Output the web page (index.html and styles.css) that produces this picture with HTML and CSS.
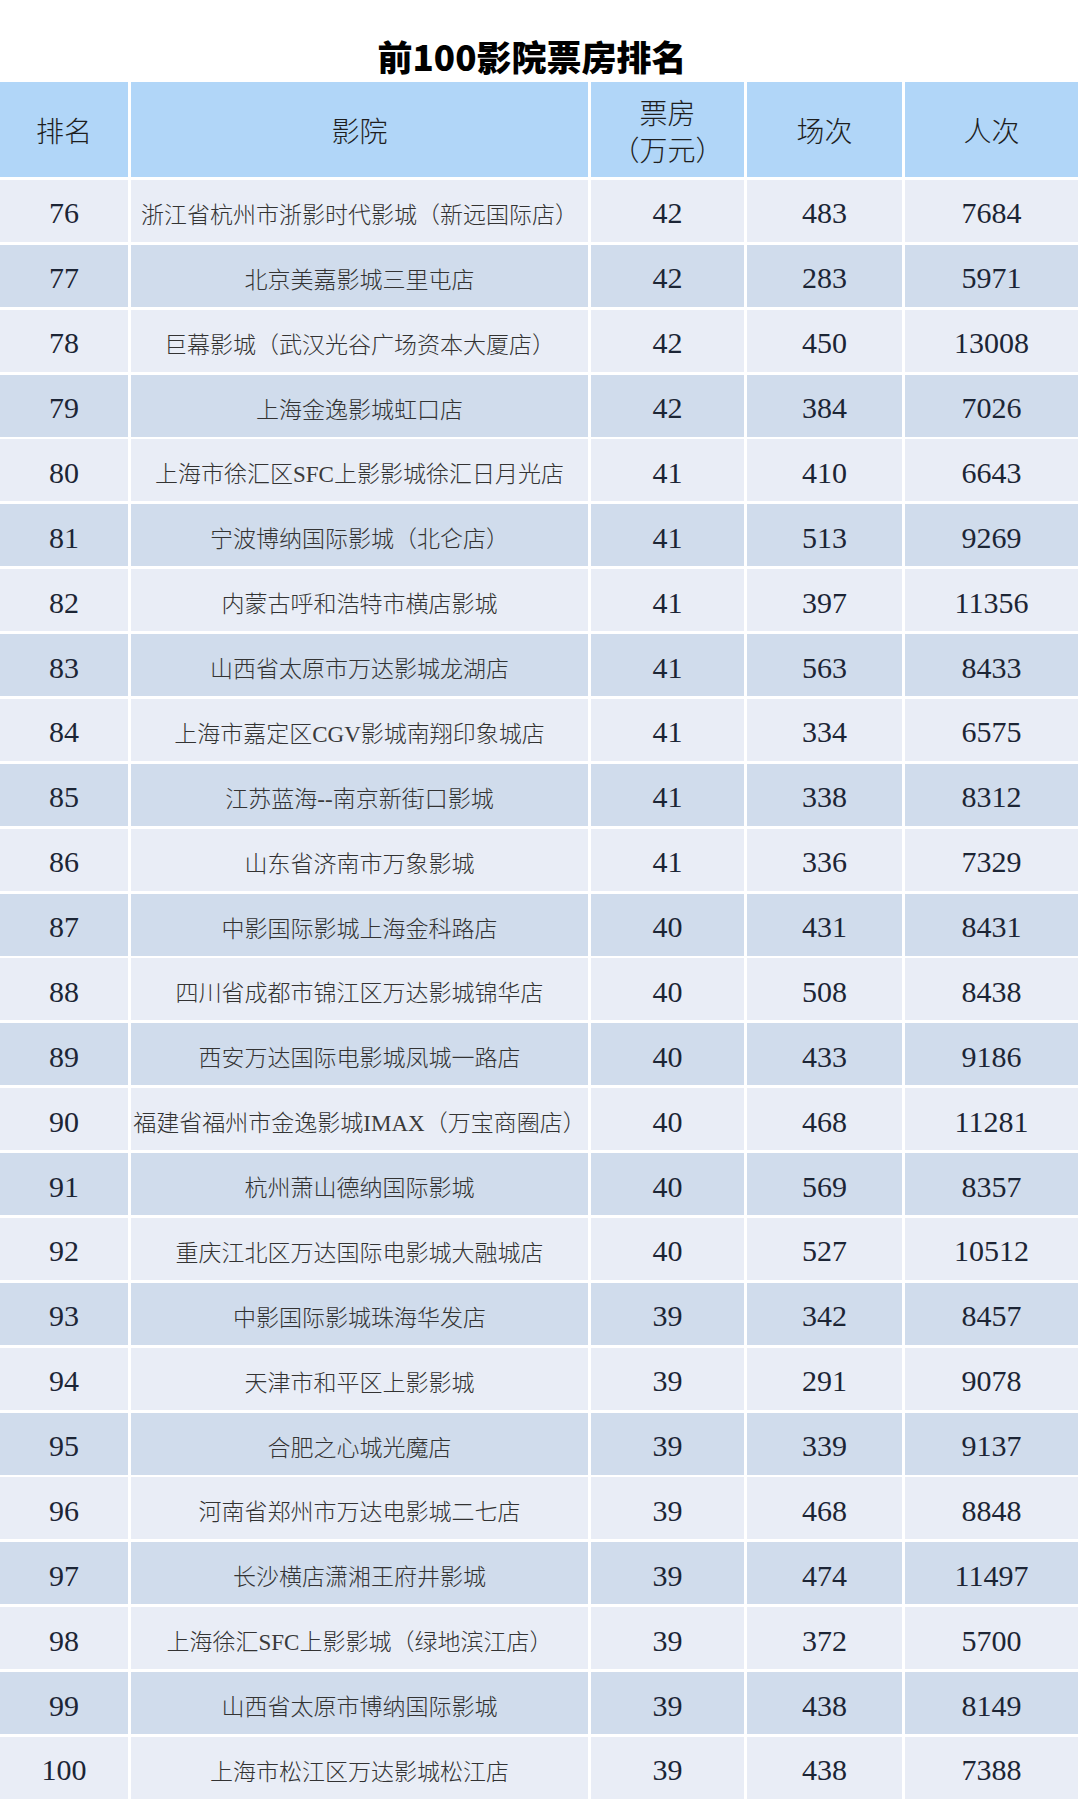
FILE: index.html
```html
<!DOCTYPE html>
<html lang="zh-CN">
<head>
<meta charset="utf-8">
<title>前100影院票房排名</title>
<link rel="stylesheet" href="styles.css">
</head>
<body>
<div class="page">
  <h1 class="title">前100影院票房排名</h1>
  <div class="grid">
    <div class="cell head">排名</div>
    <div class="cell head">影院</div>
    <div class="cell head two"><span>票房</span><span>（万元）</span></div>
    <div class="cell head">场次</div>
    <div class="cell head">人次</div>

    <div class="cell num light">76</div><div class="name light">浙江省杭州市浙影时代影城（新远国际店）</div><div class="cell num light">42</div><div class="cell num light">483</div><div class="cell num light">7684</div>
    <div class="cell num dark">77</div><div class="name dark">北京美嘉影城三里屯店</div><div class="cell num dark">42</div><div class="cell num dark">283</div><div class="cell num dark">5971</div>
    <div class="cell num light">78</div><div class="name light">巨幕影城（武汉光谷广场资本大厦店）</div><div class="cell num light">42</div><div class="cell num light">450</div><div class="cell num light">13008</div>
    <div class="cell num dark">79</div><div class="name dark">上海金逸影城虹口店</div><div class="cell num dark">42</div><div class="cell num dark">384</div><div class="cell num dark">7026</div>
    <div class="cell num light">80</div><div class="name light">上海市徐汇区<span class="lat">SFC</span>上影影城徐汇日月光店</div><div class="cell num light">41</div><div class="cell num light">410</div><div class="cell num light">6643</div>
    <div class="cell num dark">81</div><div class="name dark">宁波博纳国际影城（北仑店）</div><div class="cell num dark">41</div><div class="cell num dark">513</div><div class="cell num dark">9269</div>
    <div class="cell num light">82</div><div class="name light">内蒙古呼和浩特市横店影城</div><div class="cell num light">41</div><div class="cell num light">397</div><div class="cell num light">11356</div>
    <div class="cell num dark">83</div><div class="name dark">山西省太原市万达影城龙湖店</div><div class="cell num dark">41</div><div class="cell num dark">563</div><div class="cell num dark">8433</div>
    <div class="cell num light">84</div><div class="name light">上海市嘉定区<span class="lat">CGV</span>影城南翔印象城店</div><div class="cell num light">41</div><div class="cell num light">334</div><div class="cell num light">6575</div>
    <div class="cell num dark">85</div><div class="name dark">江苏蓝海<span class="lat">--</span>南京新街口影城</div><div class="cell num dark">41</div><div class="cell num dark">338</div><div class="cell num dark">8312</div>
    <div class="cell num light">86</div><div class="name light">山东省济南市万象影城</div><div class="cell num light">41</div><div class="cell num light">336</div><div class="cell num light">7329</div>
    <div class="cell num dark">87</div><div class="name dark">中影国际影城上海金科路店</div><div class="cell num dark">40</div><div class="cell num dark">431</div><div class="cell num dark">8431</div>
    <div class="cell num light">88</div><div class="name light">四川省成都市锦江区万达影城锦华店</div><div class="cell num light">40</div><div class="cell num light">508</div><div class="cell num light">8438</div>
    <div class="cell num dark">89</div><div class="name dark">西安万达国际电影城凤城一路店</div><div class="cell num dark">40</div><div class="cell num dark">433</div><div class="cell num dark">9186</div>
    <div class="cell num light">90</div><div class="name light">福建省福州市金逸影城<span class="lat">IMAX</span>（万宝商圈店）</div><div class="cell num light">40</div><div class="cell num light">468</div><div class="cell num light">11281</div>
    <div class="cell num dark">91</div><div class="name dark">杭州萧山德纳国际影城</div><div class="cell num dark">40</div><div class="cell num dark">569</div><div class="cell num dark">8357</div>
    <div class="cell num light">92</div><div class="name light">重庆江北区万达国际电影城大融城店</div><div class="cell num light">40</div><div class="cell num light">527</div><div class="cell num light">10512</div>
    <div class="cell num dark">93</div><div class="name dark">中影国际影城珠海华发店</div><div class="cell num dark">39</div><div class="cell num dark">342</div><div class="cell num dark">8457</div>
    <div class="cell num light">94</div><div class="name light">天津市和平区上影影城</div><div class="cell num light">39</div><div class="cell num light">291</div><div class="cell num light">9078</div>
    <div class="cell num dark">95</div><div class="name dark">合肥之心城光魔店</div><div class="cell num dark">39</div><div class="cell num dark">339</div><div class="cell num dark">9137</div>
    <div class="cell num light">96</div><div class="name light">河南省郑州市万达电影城二七店</div><div class="cell num light">39</div><div class="cell num light">468</div><div class="cell num light">8848</div>
    <div class="cell num dark">97</div><div class="name dark">长沙横店潇湘王府井影城</div><div class="cell num dark">39</div><div class="cell num dark">474</div><div class="cell num dark">11497</div>
    <div class="cell num light">98</div><div class="name light">上海徐汇<span class="lat">SFC</span>上影影城（绿地滨江店）</div><div class="cell num light">39</div><div class="cell num light">372</div><div class="cell num light">5700</div>
    <div class="cell num dark">99</div><div class="name dark">山西省太原市博纳国际影城</div><div class="cell num dark">39</div><div class="cell num dark">438</div><div class="cell num dark">8149</div>
    <div class="cell num light">100</div><div class="name light">上海市松江区万达影城松江店</div><div class="cell num light">39</div><div class="cell num light">438</div><div class="cell num light">7388</div>
  </div>
</div>
</body>
</html>
```

FILE: styles.css
```css
html, body {
  margin: 0;
  padding: 0;
  background: #ffffff;
}

.page {
  width: 1080px;
}

.title {
  margin: 0;
  height: 82px;
  box-sizing: border-box;
  padding: 36px 16px 6px 0;
  line-height: 40px;
  text-align: center;
  font-family: "Noto Sans CJK SC", "Noto Sans", sans-serif;
  font-weight: 900;
  font-size: 35px;
  color: #000000;
}

.grid {
  width: 1078px;
  display: grid;
  grid-template-columns: 128px 457px 153px 155px 173px;
  grid-template-rows: 95px;
  grid-auto-rows: 62px;
  column-gap: 3px;
  row-gap: 2.875px;
}

.cell {
  display: flex;
  align-items: center;
  justify-content: center;
  white-space: nowrap;
  overflow: hidden;
  box-sizing: border-box;
}

.head {
  background: #b1d6f8;
  font-family: "Noto Sans CJK SC", serif;
  font-weight: 300;
  font-size: 28px;
  color: #1e1e1e;
}

.two {
  flex-direction: column;
  line-height: 37px;
  padding-top: 2px;
}

.light {
  background: #e9edf6;
}

.dark {
  background: #d0dcec;
}

.num {
  font-family: "Liberation Serif", serif;
  font-size: 30px;
  color: #1c2535;
  padding-top: 5px;
}

.name {
  box-sizing: border-box;
  padding-top: 4px;
  line-height: 58px;
  text-align: center;
  white-space: nowrap;
  overflow: hidden;
  font-family: "Noto Sans CJK SC", sans-serif;
  font-weight: 300;
  font-size: 23px;
  color: #333333;
}

.lat {
  font-family: "Liberation Serif", serif;
  font-size: 23px;
  color: #3a3a3a;
}
```
